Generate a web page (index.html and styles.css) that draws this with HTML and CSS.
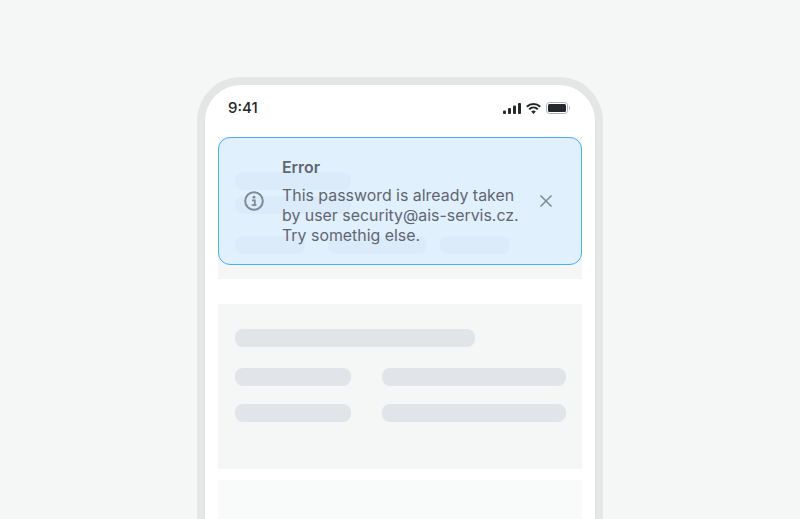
FILE: index.html
```html
<!DOCTYPE html>
<html>
  <head>
    <title>Error alert</title>
    <link rel="stylesheet" href="styles.css">
  </head>
  <body>
    <div class="phone">
      <div class="status-bar">
        <span class="time">9:41</span>
        <div class="status-icons">
          <svg width="18" height="11" viewBox="0 0 18 11">
            <rect x="0" y="7.5" width="3" height="3.5" rx="1" fill="#25282c"/>
            <rect x="5" y="5" width="3" height="6" rx="1" fill="#25282c"/>
            <rect x="10" y="2.5" width="3" height="8.5" rx="1" fill="#25282c"/>
            <rect x="15" y="0" width="3" height="11" rx="1" fill="#25282c"/>
          </svg>
          <svg width="15" height="11" viewBox="0 0 15 11">
            <path d="M.8 3.800C4.500 .2 10.500 .2 14.200 3.800" fill="none" stroke="#25282c" stroke-width="2"/>
            <path d="M3.200 6.300C5.700 4 9.300 4 11.800 6.300" fill="none" stroke="#25282c" stroke-width="2"/>
            <path d="M5.200 8.400L7.500 11L9.800 8.400C8.500 7.300 6.500 7.300 5.200 8.400Z" fill="#25282c"/>
          </svg>
          <svg width="24" height="12" viewBox="0 0 24 12">
            <rect x=".5" y=".5" width="21" height="11" rx="3" fill="none" stroke="#a9b4c0"/>
            <rect x="2" y="2" width="18" height="8" rx="1.5" fill="#25282c"/>
            <path d="M23 4v4c.7-.3 1-1.100 1-2s-.3-1.700-1-2z" fill="#a9b4c0"/>
          </svg>
        </div>
      </div>

      <div class="screen">
        <div class="alert">
          <svg class="alert-icon" width="20" height="20" viewBox="0 0 20 20">
            <circle cx="10" cy="10" r="8.800" fill="none" stroke="#7f8a92" stroke-width="2"/>
            <circle cx="10" cy="6.200" r="1.400" fill="#7f8a92"/>
            <path d="M8 9.300h2.800v4.500M7.800 14.200h4.600" fill="none" stroke="#7f8a92" stroke-width="1.800"/>
          </svg>
          <div class="alert-text">
            <div class="alert-title">Error</div>
            <div>This password is already taken by user security@ais-servis.cz. Try somethig else.</div>
          </div>
          <svg class="alert-close" width="14" height="14" viewBox="0 0 14 14">
            <path d="M1.500 1.500L12.500 12.500M12.500 1.500L1.500 12.500" stroke="#7f8a92" stroke-width="1.500" fill="none"/>
          </svg>
        </div>

        <div class="card card-first">
          <div class="bar bar-116"></div>
          <div class="bar bar-116 bar-near"></div>
          <div class="row-three">
            <div class="bar bar-70"></div>
            <div class="bar bar-99"></div>
            <div class="bar bar-70"></div>
          </div>
        </div>

        <div class="card card-second">
          <div class="bar bar-240"></div>
          <div class="row-two">
            <div class="bar bar-116"></div>
            <div class="bar bar-184"></div>
          </div>
          <div class="row-two row-near">
            <div class="bar bar-116"></div>
            <div class="bar bar-184"></div>
          </div>
        </div>

        <div class="card card-third"></div>
      </div>
    </div>
  </body>
</html>
```

FILE: styles.css
```css
html,
body {
  height: 100%;
  overflow: hidden;
}

body {
  margin: 0;
  background-color: #f5f7f7;
  font-family: "Inter", sans-serif;
}

.phone {
  box-sizing: border-box;
  width: 406px;
  height: 442px;
  margin: 77px auto 0;
  padding: 0 13px;
  background-color: #fff;
  border: 8px solid #e4e6e6;
  border-bottom: none;
  border-radius: 44px 44px 0 0;
}

.status-bar {
  display: flex;
  align-items: center;
  justify-content: space-between;
  height: 44px;
  padding: 0 12px 0 10px;
}

.time {
  font-size: 15px;
  font-weight: 500;
  color: #25282c;
}

.status-icons {
  display: flex;
  align-items: center;
  gap: 5px;
  margin-top: 2px;
}

.screen {
  position: relative;
  margin-top: 8px;
}

.alert {
  position: absolute;
  top: 0;
  left: 0;
  right: 0;
  z-index: 1;
  box-sizing: border-box;
  display: flex;
  align-items: center;
  height: 128px;
  padding: 0 27px 0 25px;
  background-color: rgba(217, 238, 255, 0.75);
  border: 1px solid #4aaef5;
  border-radius: 12px;
  color: #5f6770;
  font-size: 15.9px;
  line-height: 20px;
}

.alert-text {
  width: 240px;
  margin-left: 18px;
  padding-top: 1px;
}

.alert-title {
  margin-bottom: 8px;
  font-weight: 600;
}

.alert-close {
  margin-left: 17px;
}

.card {
  box-sizing: border-box;
  padding: 0 16px 0 17px;
  background-color: #f5f7f7;
}

.card-first {
  height: 142px;
  padding-top: 35px;
}

.card-second {
  height: 165px;
  margin-top: 25px;
  padding-top: 25px;
}

.card-third {
  height: 39px;
  margin-top: 11px;
  background-color: #f9fafa;
}

.bar {
  flex: none;
  height: 18px;
  background-color: #e1e4e8;
  border-radius: 8px;
}

.bar-near {
  margin-top: 6px;
}

.bar-70 {
  width: 70px;
}

.bar-99 {
  width: 99px;
}

.bar-116 {
  width: 116px;
}

.bar-184 {
  width: 184px;
}

.bar-240 {
  width: 240px;
}

.row-two {
  display: flex;
  gap: 31px;
  margin-top: 21px;
}

.row-near {
  margin-top: 18px;
}

.row-three {
  display: flex;
  gap: 23px;
  margin-top: 22px;
}

.row-three .bar:last-child {
  margin-left: -10px;
}
```
